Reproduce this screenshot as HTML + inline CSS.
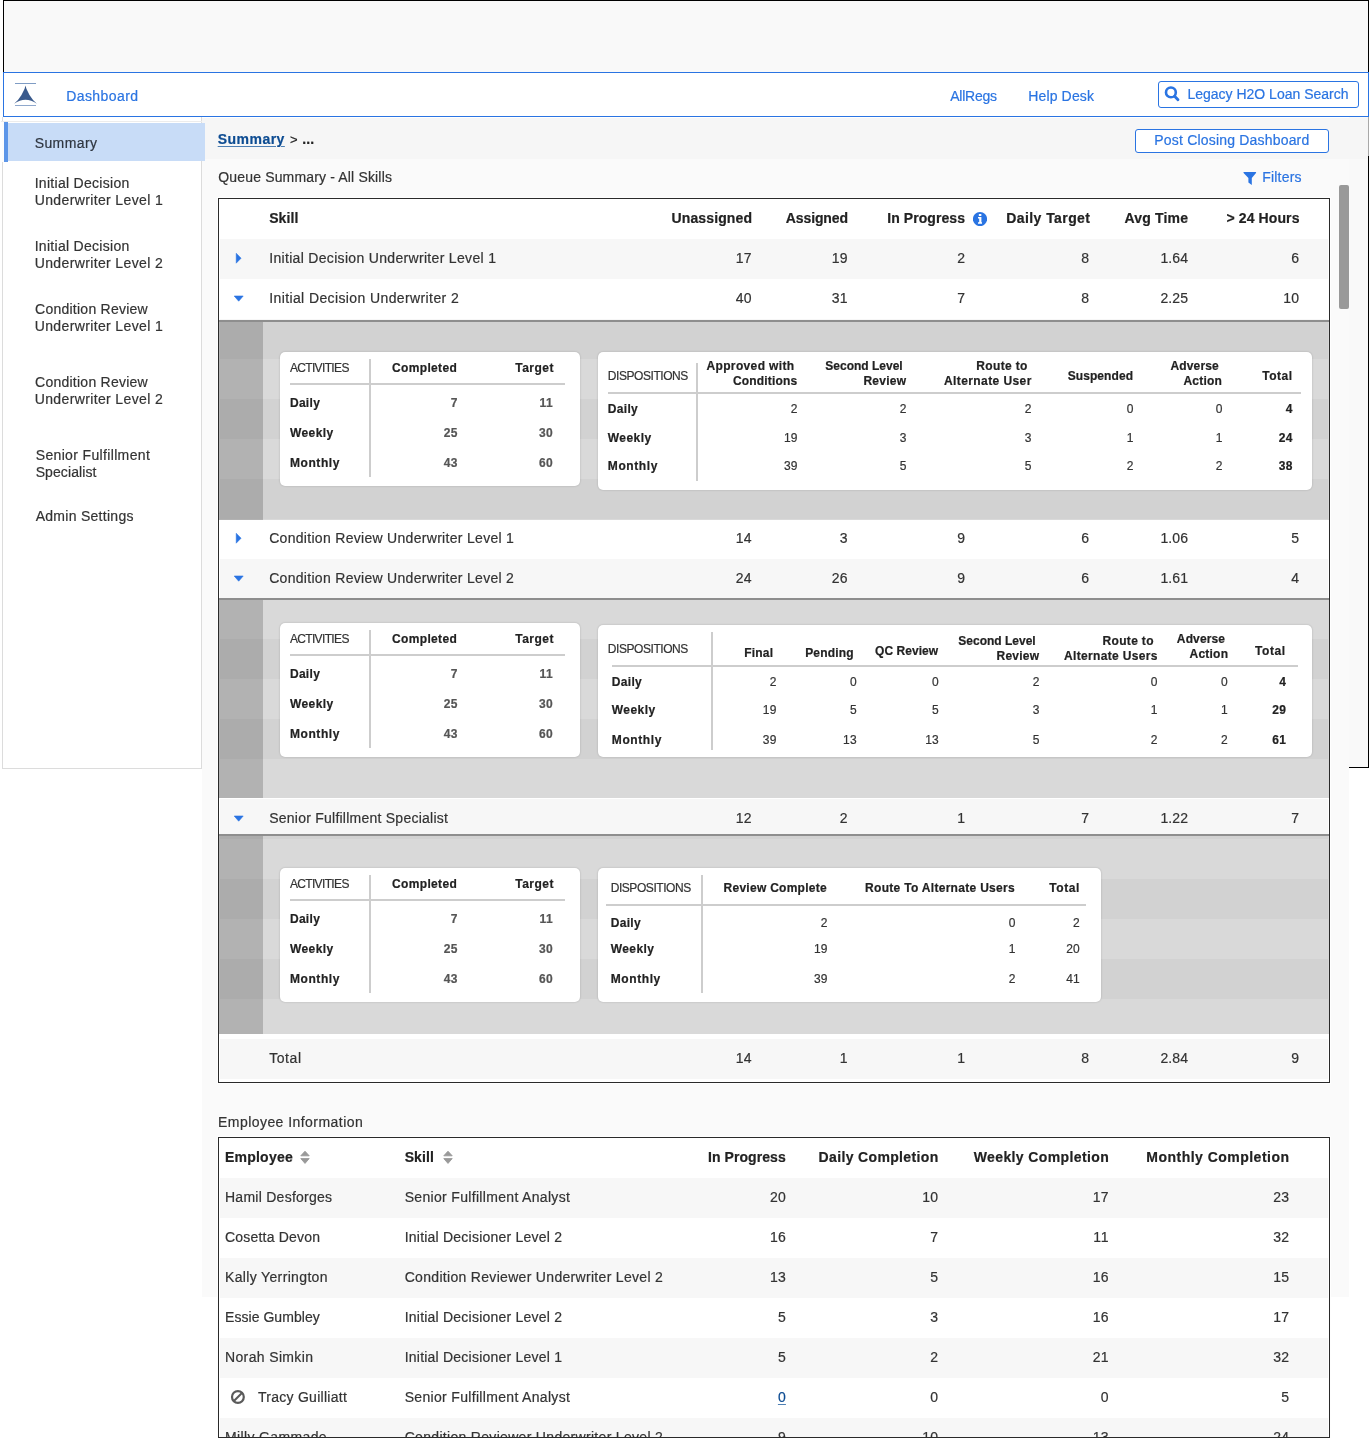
<!DOCTYPE html>
<html lang="en">
<head>
<meta charset="utf-8">
<title>Dashboard - Summary</title>
<style>
html,body{margin:0;padding:0;}
body{position:relative;will-change:transform;width:1369px;height:1438px;overflow:hidden;background:#fff;
  font-family:"Liberation Sans",Arial,Helvetica,sans-serif;font-size:14px;line-height:20px;color:#333;}
body div,body a,body svg{position:absolute;box-sizing:border-box;}
section,nav,header,main{display:block;}
.x{white-space:nowrap;-webkit-text-stroke:.2px;}
a{text-decoration:none;color:inherit;}
.s0{background:#f7f7f7;}
.card{background:#fff;border-radius:5px;box-shadow:0 0 2px rgba(0,0,0,.22);}
.ln{background:#cdcdcd;}

</style>
</head>
<body>
<div style="left:3px;top:0;width:1366px;height:72px;border:1px solid #000;border-bottom:0;background:#f9f9f9"></div>
<div style="left:1349px;top:117px;width:20px;height:651px;border-right:1px solid #000;border-bottom:1px solid #000;background:#f9f9f9"></div>
<header>
<div style="left:3px;top:72px;width:1366px;height:45px;border:1px solid #2a74e2;background:#fff"></div>
<svg style="left:12px;top:80px" width="28" height="28" viewBox="0 0 28 28"><rect x="3" y="3" width="21" height="1" fill="#7f9cc4"/><rect x="3" y="25" width="21" height="1" fill="#8fa8cc"/><path d="M13.5 5.6 L14.4 8.8 L17.5 15 Q20.4 20 24.9 23.7 Q13.5 15.8 2.1 23.7 Q6.6 20 9.5 15 L12.6 8.8Z" fill="#3a5a8c"/></svg>
<a class="x" style="top:86.15px;left:66.2px;color:#2a74e2;"><span style="letter-spacing:0.42px;margin-right:-0.42px">Dashboard</span></a>
<a class="x" style="top:86.15px;left:950.2px;color:#2a74e2;"><span style="letter-spacing:-0.22px;margin-right:0.22px">AllRegs</span></a>
<a class="x" style="top:86.15px;left:1028.2px;color:#2a74e2;"><span style="letter-spacing:0.15px;margin-right:-0.15px">Help Desk</span></a>
<div style="left:1158px;top:81px;width:201px;height:27px;border:1px solid #2a74e2;border-radius:3px;background:#fff"></div>
<svg style="left:1163px;top:84px" width="18" height="19" viewBox="0 0 18 19"><circle cx="7.9" cy="8.4" r="4.9" fill="none" stroke="#2a74e2" stroke-width="2.6"/><path d="M11.6 12.2 L15 15.8" stroke="#2a74e2" stroke-width="2.8" stroke-linecap="round"/></svg>
<div class="x" style="top:84.15px;left:1187.4px;color:#2a74e2;"><span>Legacy H2O Loan Search</span></div>
</header>
<div style="left:202px;top:118px;width:1147px;height:1179px;background:#fafafa"></div>
<div style="left:202px;top:118px;width:1166px;height:41px;background:#f6f6f6"></div>
<nav>
<div style="left:2px;top:117px;width:200px;height:652px;border:1px solid #dcdcdc;border-top:0;background:#fff"></div>
<div style="left:1px;top:121px;width:201px;height:1px;background:#ececec"></div>
<div style="left:2px;top:122px;width:2px;height:40px;background:#fdfdfd"></div>
<div style="left:8px;top:123px;width:197px;height:38px;background:#c8dcf7"></div>
<div style="left:4px;top:122px;width:4px;height:40px;background:#5d96e8"></div>
<a class="x" style="top:133.15px;left:34.7px;color:#2f3640;"><span style="letter-spacing:0.4px;margin-right:-0.4px">Summary</span></a>
<a class="x" style="top:173.15px;left:34.7px;"><span style="letter-spacing:0.29px;margin-right:-0.29px">Initial Decision</span></a>
<a class="x" style="top:190.15px;left:34.7px;"><span style="letter-spacing:0.37px;margin-right:-0.37px">Underwriter Level 1</span></a>
<a class="x" style="top:236.15px;left:34.7px;"><span style="letter-spacing:0.29px;margin-right:-0.29px">Initial Decision</span></a>
<a class="x" style="top:253.15px;left:34.7px;"><span style="letter-spacing:0.37px;margin-right:-0.37px">Underwriter Level 2</span></a>
<a class="x" style="top:299.15px;left:35.1px;"><span style="letter-spacing:0.24px;margin-right:-0.24px">Condition Review</span></a>
<a class="x" style="top:316.15px;left:34.7px;"><span style="letter-spacing:0.37px;margin-right:-0.37px">Underwriter Level 1</span></a>
<a class="x" style="top:372.15px;left:35.1px;"><span style="letter-spacing:0.24px;margin-right:-0.24px">Condition Review</span></a>
<a class="x" style="top:389.15px;left:34.7px;"><span style="letter-spacing:0.37px;margin-right:-0.37px">Underwriter Level 2</span></a>
<a class="x" style="top:445.15px;left:35.7px;"><span style="letter-spacing:0.35px;margin-right:-0.35px">Senior Fulfillment</span></a>
<a class="x" style="top:462.15px;left:35.7px;"><span style="letter-spacing:0.09px;margin-right:-0.09px">Specialist</span></a>
<a class="x" style="top:506.15px;left:35.7px;"><span style="letter-spacing:0.28px;margin-right:-0.28px">Admin Settings</span></a>
</nav>
<main>
<div style="left:1368px;top:117px;width:1px;height:39px;background:#a8a8a8"></div>
<a class="x" style="top:129.15px;left:217.7px;font-weight:700;color:#0d4c92;text-decoration:underline;text-decoration-thickness:1.4px;text-decoration-color:#4f80b4;text-underline-offset:2.4px;"><span style="letter-spacing:0.48px;margin-right:-0.48px">Summary</span></a>
<div class="x" style="top:130.00px;left:289.9px;font-size:13px;line-height:19px;color:#222;"><span style="letter-spacing:-0.16px;margin-right:0.16px">&gt;</span></div>
<div class="x" style="top:129.15px;left:302.3px;font-weight:700;color:#222;"><span style="letter-spacing:0.1px;margin-right:-0.1px">...</span></div>
<div style="left:1135px;top:129px;width:194px;height:24px;border:1px solid #2a74e2;border-radius:3px;background:#fff"></div>
<a class="x" style="top:130.15px;left:1154.3px;color:#2a74e2;"><span style="letter-spacing:0.19px;margin-right:-0.19px">Post Closing Dashboard</span></a>
<div class="x" style="top:167.15px;left:218.3px;"><span style="letter-spacing:0.16px;margin-right:-0.16px">Queue Summary - All Skills</span></div>
<svg style="left:1242px;top:171px" width="16" height="16" viewBox="0 0 16 16"><path d="M2 1.1 H13.6 Q14.6 1.1 14 2 L9.8 7 V14 L6.4 11.4 V7 L1.6 2 Q1 1.1 2 1.1Z" fill="#2a74e2"/></svg>
<a class="x" style="top:166.65px;left:1262.2px;color:#2a74e2;"><span style="letter-spacing:0.2px;margin-right:-0.2px">Filters</span></a>
<div style="left:1339px;top:185px;width:10px;height:124px;background:#999;border-radius:2px"></div>
<section>
<div style="left:218px;top:198px;width:1112px;height:885px;border:1px solid #2a2a2a;background:#fff;box-shadow:0 0 0 1px #fefefe"></div>
<div class="s0" style="left:220px;top:239px;width:1108px;height:40px"></div>
<div class="s0" style="left:220px;top:319px;width:1108px;height:40px"></div>
<div class="s0" style="left:220px;top:399px;width:1108px;height:40px"></div>
<div class="s0" style="left:220px;top:479px;width:1108px;height:40px"></div>
<div class="s0" style="left:220px;top:559px;width:1108px;height:40px"></div>
<div class="s0" style="left:220px;top:639px;width:1108px;height:40px"></div>
<div class="s0" style="left:220px;top:719px;width:1108px;height:40px"></div>
<div class="s0" style="left:220px;top:799px;width:1108px;height:40px"></div>
<div class="s0" style="left:220px;top:879px;width:1108px;height:40px"></div>
<div class="s0" style="left:220px;top:959px;width:1108px;height:40px"></div>
<div class="s0" style="left:220px;top:1039px;width:1108px;height:40px"></div>
<div class="x" style="top:208.15px;left:269.2px;font-weight:700;color:#222;"><span style="letter-spacing:0.08px;margin-right:-0.08px">Skill</span></div>
<div class="x" style="top:208.15px;right:617.0px;text-align:right;font-weight:700;color:#222;"><span style="letter-spacing:0.13px;margin-right:-0.13px">Unassigned</span></div>
<div class="x" style="top:208.15px;right:521.0px;text-align:right;font-weight:700;color:#222;"><span style="letter-spacing:-0.12px;margin-right:0.12px">Assigned</span></div>
<div class="x" style="top:208.15px;right:404.0px;text-align:right;font-weight:700;color:#222;"><span style="letter-spacing:0.07px;margin-right:-0.07px">In Progress</span></div>
<div class="x" style="top:208.15px;right:279.0px;text-align:right;font-weight:700;color:#222;"><span style="letter-spacing:0.42px;margin-right:-0.42px">Daily Target</span></div>
<div class="x" style="top:208.15px;right:181.0px;text-align:right;font-weight:700;color:#222;"><span style="letter-spacing:0.17px;margin-right:-0.17px">Avg Time</span></div>
<div class="x" style="top:208.15px;right:69.5px;text-align:right;font-weight:700;color:#222;"><span style="letter-spacing:0.12px;margin-right:-0.12px">&gt; 24 Hours</span></div>
<svg style="left:973px;top:212px" width="14" height="14" viewBox="0 0 14 14"><circle cx="7" cy="7.1" r="7.1" fill="#2a74e2"/><rect x="5.8" y="1.9" width="2.6" height="2" rx=".4" fill="#fff"/><path d="M5 5.1 H8.4 V10.3 H9 V11.8 H5 V10.3 H6.2 V6.4 H5Z" fill="#fff"/></svg>
<svg style="left:234px;top:251px" width="10" height="14" viewBox="0 0 10 14"><path d="M2.2 2.2 L7.1 7.2 L2.2 12.2Z" fill="#2a74e2" stroke="#2a74e2" stroke-width=".5" stroke-linejoin="round"/></svg>
<div class="x" style="top:248.15px;left:269.2px;"><span style="letter-spacing:0.32px;margin-right:-0.32px">Initial Decision Underwriter Level 1</span></div>
<div class="x" style="top:248.15px;right:617.5px;text-align:right;"><span style="letter-spacing:0.22px;margin-right:-0.22px">17</span></div>
<div class="x" style="top:248.15px;right:521.5px;text-align:right;"><span style="letter-spacing:0.22px;margin-right:-0.22px">19</span></div>
<div class="x" style="top:248.15px;right:404.0px;text-align:right;"><span style="letter-spacing:0.22px;margin-right:-0.22px">2</span></div>
<div class="x" style="top:248.15px;right:280.0px;text-align:right;"><span style="letter-spacing:0.22px;margin-right:-0.22px">8</span></div>
<div class="x" style="top:248.15px;right:181.0px;text-align:right;"><span style="letter-spacing:0.11px;margin-right:-0.11px">1.64</span></div>
<div class="x" style="top:248.15px;right:70.0px;text-align:right;"><span style="letter-spacing:0.22px;margin-right:-0.22px">6</span></div>
<svg style="left:233px;top:293px" width="12" height="10" viewBox="0 0 12 10"><path d="M1.2 3 L10.2 3 L5.7 8.2Z" fill="#2a74e2" stroke="#2a74e2" stroke-width=".6" stroke-linejoin="round"/></svg>
<div class="x" style="top:288.15px;left:269.2px;"><span style="letter-spacing:0.39px;margin-right:-0.39px">Initial Decision Underwriter 2</span></div>
<div class="x" style="top:288.15px;right:617.5px;text-align:right;"><span style="letter-spacing:0.22px;margin-right:-0.22px">40</span></div>
<div class="x" style="top:288.15px;right:521.5px;text-align:right;"><span style="letter-spacing:0.22px;margin-right:-0.22px">31</span></div>
<div class="x" style="top:288.15px;right:404.0px;text-align:right;"><span style="letter-spacing:0.22px;margin-right:-0.22px">7</span></div>
<div class="x" style="top:288.15px;right:280.0px;text-align:right;"><span style="letter-spacing:0.22px;margin-right:-0.22px">8</span></div>
<div class="x" style="top:288.15px;right:181.0px;text-align:right;"><span style="letter-spacing:0.11px;margin-right:-0.11px">2.25</span></div>
<div class="x" style="top:288.15px;right:70.0px;text-align:right;"><span style="letter-spacing:0.22px;margin-right:-0.22px">10</span></div>
<svg style="left:234px;top:531px" width="10" height="14" viewBox="0 0 10 14"><path d="M2.2 2.2 L7.1 7.2 L2.2 12.2Z" fill="#2a74e2" stroke="#2a74e2" stroke-width=".5" stroke-linejoin="round"/></svg>
<div class="x" style="top:528.15px;left:269.2px;"><span style="letter-spacing:0.3px;margin-right:-0.3px">Condition Review Underwriter Level 1</span></div>
<div class="x" style="top:528.15px;right:617.5px;text-align:right;"><span style="letter-spacing:0.22px;margin-right:-0.22px">14</span></div>
<div class="x" style="top:528.15px;right:521.5px;text-align:right;"><span style="letter-spacing:0.22px;margin-right:-0.22px">3</span></div>
<div class="x" style="top:528.15px;right:404.0px;text-align:right;"><span style="letter-spacing:0.22px;margin-right:-0.22px">9</span></div>
<div class="x" style="top:528.15px;right:280.0px;text-align:right;"><span style="letter-spacing:0.22px;margin-right:-0.22px">6</span></div>
<div class="x" style="top:528.15px;right:181.0px;text-align:right;"><span style="letter-spacing:0.11px;margin-right:-0.11px">1.06</span></div>
<div class="x" style="top:528.15px;right:70.0px;text-align:right;"><span style="letter-spacing:0.22px;margin-right:-0.22px">5</span></div>
<svg style="left:233px;top:573px" width="12" height="10" viewBox="0 0 12 10"><path d="M1.2 3 L10.2 3 L5.7 8.2Z" fill="#2a74e2" stroke="#2a74e2" stroke-width=".6" stroke-linejoin="round"/></svg>
<div class="x" style="top:568.15px;left:269.2px;"><span style="letter-spacing:0.3px;margin-right:-0.3px">Condition Review Underwriter Level 2</span></div>
<div class="x" style="top:568.15px;right:617.5px;text-align:right;"><span style="letter-spacing:0.22px;margin-right:-0.22px">24</span></div>
<div class="x" style="top:568.15px;right:521.5px;text-align:right;"><span style="letter-spacing:0.22px;margin-right:-0.22px">26</span></div>
<div class="x" style="top:568.15px;right:404.0px;text-align:right;"><span style="letter-spacing:0.22px;margin-right:-0.22px">9</span></div>
<div class="x" style="top:568.15px;right:280.0px;text-align:right;"><span style="letter-spacing:0.22px;margin-right:-0.22px">6</span></div>
<div class="x" style="top:568.15px;right:181.0px;text-align:right;"><span style="letter-spacing:0.11px;margin-right:-0.11px">1.61</span></div>
<div class="x" style="top:568.15px;right:70.0px;text-align:right;"><span style="letter-spacing:0.22px;margin-right:-0.22px">4</span></div>
<svg style="left:233px;top:813px" width="12" height="10" viewBox="0 0 12 10"><path d="M1.2 3 L10.2 3 L5.7 8.2Z" fill="#2a74e2" stroke="#2a74e2" stroke-width=".6" stroke-linejoin="round"/></svg>
<div class="x" style="top:808.15px;left:269.2px;"><span style="letter-spacing:0.24px;margin-right:-0.24px">Senior Fulfillment Specialist</span></div>
<div class="x" style="top:808.15px;right:617.5px;text-align:right;"><span style="letter-spacing:0.22px;margin-right:-0.22px">12</span></div>
<div class="x" style="top:808.15px;right:521.5px;text-align:right;"><span style="letter-spacing:0.22px;margin-right:-0.22px">2</span></div>
<div class="x" style="top:808.15px;right:404.0px;text-align:right;"><span style="letter-spacing:0.22px;margin-right:-0.22px">1</span></div>
<div class="x" style="top:808.15px;right:280.0px;text-align:right;"><span style="letter-spacing:0.22px;margin-right:-0.22px">7</span></div>
<div class="x" style="top:808.15px;right:181.0px;text-align:right;"><span style="letter-spacing:0.11px;margin-right:-0.11px">1.22</span></div>
<div class="x" style="top:808.15px;right:70.0px;text-align:right;"><span style="letter-spacing:0.22px;margin-right:-0.22px">7</span></div>
<div class="x" style="top:1048.15px;left:269.2px;"><span style="letter-spacing:0.57px;margin-right:-0.57px">Total</span></div>
<div class="x" style="top:1048.15px;right:617.5px;text-align:right;"><span style="letter-spacing:0.22px;margin-right:-0.22px">14</span></div>
<div class="x" style="top:1048.15px;right:521.5px;text-align:right;"><span style="letter-spacing:0.22px;margin-right:-0.22px">1</span></div>
<div class="x" style="top:1048.15px;right:404.0px;text-align:right;"><span style="letter-spacing:0.22px;margin-right:-0.22px">1</span></div>
<div class="x" style="top:1048.15px;right:280.0px;text-align:right;"><span style="letter-spacing:0.22px;margin-right:-0.22px">8</span></div>
<div class="x" style="top:1048.15px;right:181.0px;text-align:right;"><span style="letter-spacing:0.11px;margin-right:-0.11px">2.84</span></div>
<div class="x" style="top:1048.15px;right:70.0px;text-align:right;"><span style="letter-spacing:0.22px;margin-right:-0.22px">9</span></div>
<div style="left:219px;top:320px;width:1110px;height:200px;background:rgba(0,0,0,.148);border-top:2px solid #8e8e8e"></div>
<div style="left:219px;top:322px;width:44px;height:198px;background:rgba(0,0,0,.181)"></div>
<div style="left:219px;top:598px;width:1110px;height:200px;background:rgba(0,0,0,.148);border-top:2px solid #8e8e8e"></div>
<div style="left:219px;top:600px;width:44px;height:198px;background:rgba(0,0,0,.181)"></div>
<div style="left:219px;top:834px;width:1110px;height:200px;background:rgba(0,0,0,.148);border-top:2px solid #8e8e8e"></div>
<div style="left:219px;top:836px;width:44px;height:198px;background:rgba(0,0,0,.181)"></div>
<div class="card" style="left:280px;top:352px;width:300px;height:134px"></div>
<div class="ln" style="left:290px;top:383px;width:275px;height:2px"></div>
<div class="ln" style="left:369px;top:359px;width:2px;height:118px"></div>
<div class="x" style="top:359.24px;left:289.9px;font-size:12px;line-height:18px;"><span style="letter-spacing:-0.65px;margin-right:0.65px">ACTIVITIES</span></div>
<div class="x" style="top:359.24px;right:912.2px;text-align:right;font-size:12px;line-height:18px;font-weight:700;color:#222;"><span style="letter-spacing:0.34px;margin-right:-0.34px">Completed</span></div>
<div class="x" style="top:359.24px;right:815.5px;text-align:right;font-size:12px;line-height:18px;font-weight:700;color:#222;"><span style="letter-spacing:0.49px;margin-right:-0.49px">Target</span></div>
<div class="x" style="top:393.84px;left:289.9px;font-size:12px;line-height:18px;font-weight:700;color:#222;"><span style="letter-spacing:0.32px;margin-right:-0.32px">Daily</span></div>
<div class="x" style="top:393.84px;right:911.7px;text-align:right;font-size:12px;line-height:18px;font-weight:700;color:#555;"><span style="letter-spacing:0.19px;margin-right:-0.19px">7</span></div>
<div class="x" style="top:393.84px;right:816.4px;text-align:right;font-size:12px;line-height:18px;font-weight:700;color:#555;"><span style="letter-spacing:0.52px;margin-right:-0.52px">11</span></div>
<div class="x" style="top:423.84px;left:289.9px;font-size:12px;line-height:18px;font-weight:700;color:#222;"><span style="letter-spacing:0.43px;margin-right:-0.43px">Weekly</span></div>
<div class="x" style="top:423.84px;right:911.7px;text-align:right;font-size:12px;line-height:18px;font-weight:700;color:#555;"><span style="letter-spacing:0.19px;margin-right:-0.19px">25</span></div>
<div class="x" style="top:423.84px;right:816.4px;text-align:right;font-size:12px;line-height:18px;font-weight:700;color:#555;"><span style="letter-spacing:0.19px;margin-right:-0.19px">30</span></div>
<div class="x" style="top:453.84px;left:289.9px;font-size:12px;line-height:18px;font-weight:700;color:#222;"><span style="letter-spacing:0.6px;margin-right:-0.6px">Monthly</span></div>
<div class="x" style="top:453.84px;right:911.7px;text-align:right;font-size:12px;line-height:18px;font-weight:700;color:#555;"><span style="letter-spacing:0.19px;margin-right:-0.19px">43</span></div>
<div class="x" style="top:453.84px;right:816.4px;text-align:right;font-size:12px;line-height:18px;font-weight:700;color:#555;"><span style="letter-spacing:0.19px;margin-right:-0.19px">60</span></div>
<div class="card" style="left:280px;top:623px;width:300px;height:134px"></div>
<div class="ln" style="left:290px;top:654px;width:275px;height:2px"></div>
<div class="ln" style="left:369px;top:630px;width:2px;height:118px"></div>
<div class="x" style="top:630.24px;left:289.9px;font-size:12px;line-height:18px;"><span style="letter-spacing:-0.65px;margin-right:0.65px">ACTIVITIES</span></div>
<div class="x" style="top:630.24px;right:912.2px;text-align:right;font-size:12px;line-height:18px;font-weight:700;color:#222;"><span style="letter-spacing:0.34px;margin-right:-0.34px">Completed</span></div>
<div class="x" style="top:630.24px;right:815.5px;text-align:right;font-size:12px;line-height:18px;font-weight:700;color:#222;"><span style="letter-spacing:0.49px;margin-right:-0.49px">Target</span></div>
<div class="x" style="top:664.84px;left:289.9px;font-size:12px;line-height:18px;font-weight:700;color:#222;"><span style="letter-spacing:0.32px;margin-right:-0.32px">Daily</span></div>
<div class="x" style="top:664.84px;right:911.7px;text-align:right;font-size:12px;line-height:18px;font-weight:700;color:#555;"><span style="letter-spacing:0.19px;margin-right:-0.19px">7</span></div>
<div class="x" style="top:664.84px;right:816.4px;text-align:right;font-size:12px;line-height:18px;font-weight:700;color:#555;"><span style="letter-spacing:0.52px;margin-right:-0.52px">11</span></div>
<div class="x" style="top:694.84px;left:289.9px;font-size:12px;line-height:18px;font-weight:700;color:#222;"><span style="letter-spacing:0.43px;margin-right:-0.43px">Weekly</span></div>
<div class="x" style="top:694.84px;right:911.7px;text-align:right;font-size:12px;line-height:18px;font-weight:700;color:#555;"><span style="letter-spacing:0.19px;margin-right:-0.19px">25</span></div>
<div class="x" style="top:694.84px;right:816.4px;text-align:right;font-size:12px;line-height:18px;font-weight:700;color:#555;"><span style="letter-spacing:0.19px;margin-right:-0.19px">30</span></div>
<div class="x" style="top:724.84px;left:289.9px;font-size:12px;line-height:18px;font-weight:700;color:#222;"><span style="letter-spacing:0.6px;margin-right:-0.6px">Monthly</span></div>
<div class="x" style="top:724.84px;right:911.7px;text-align:right;font-size:12px;line-height:18px;font-weight:700;color:#555;"><span style="letter-spacing:0.19px;margin-right:-0.19px">43</span></div>
<div class="x" style="top:724.84px;right:816.4px;text-align:right;font-size:12px;line-height:18px;font-weight:700;color:#555;"><span style="letter-spacing:0.19px;margin-right:-0.19px">60</span></div>
<div class="card" style="left:280px;top:868px;width:300px;height:134px"></div>
<div class="ln" style="left:290px;top:899px;width:275px;height:2px"></div>
<div class="ln" style="left:369px;top:875px;width:2px;height:118px"></div>
<div class="x" style="top:875.24px;left:289.9px;font-size:12px;line-height:18px;"><span style="letter-spacing:-0.65px;margin-right:0.65px">ACTIVITIES</span></div>
<div class="x" style="top:875.24px;right:912.2px;text-align:right;font-size:12px;line-height:18px;font-weight:700;color:#222;"><span style="letter-spacing:0.34px;margin-right:-0.34px">Completed</span></div>
<div class="x" style="top:875.24px;right:815.5px;text-align:right;font-size:12px;line-height:18px;font-weight:700;color:#222;"><span style="letter-spacing:0.49px;margin-right:-0.49px">Target</span></div>
<div class="x" style="top:909.84px;left:289.9px;font-size:12px;line-height:18px;font-weight:700;color:#222;"><span style="letter-spacing:0.32px;margin-right:-0.32px">Daily</span></div>
<div class="x" style="top:909.84px;right:911.7px;text-align:right;font-size:12px;line-height:18px;font-weight:700;color:#555;"><span style="letter-spacing:0.19px;margin-right:-0.19px">7</span></div>
<div class="x" style="top:909.84px;right:816.4px;text-align:right;font-size:12px;line-height:18px;font-weight:700;color:#555;"><span style="letter-spacing:0.52px;margin-right:-0.52px">11</span></div>
<div class="x" style="top:939.84px;left:289.9px;font-size:12px;line-height:18px;font-weight:700;color:#222;"><span style="letter-spacing:0.43px;margin-right:-0.43px">Weekly</span></div>
<div class="x" style="top:939.84px;right:911.7px;text-align:right;font-size:12px;line-height:18px;font-weight:700;color:#555;"><span style="letter-spacing:0.19px;margin-right:-0.19px">25</span></div>
<div class="x" style="top:939.84px;right:816.4px;text-align:right;font-size:12px;line-height:18px;font-weight:700;color:#555;"><span style="letter-spacing:0.19px;margin-right:-0.19px">30</span></div>
<div class="x" style="top:969.84px;left:289.9px;font-size:12px;line-height:18px;font-weight:700;color:#222;"><span style="letter-spacing:0.6px;margin-right:-0.6px">Monthly</span></div>
<div class="x" style="top:969.84px;right:911.7px;text-align:right;font-size:12px;line-height:18px;font-weight:700;color:#555;"><span style="letter-spacing:0.19px;margin-right:-0.19px">43</span></div>
<div class="x" style="top:969.84px;right:816.4px;text-align:right;font-size:12px;line-height:18px;font-weight:700;color:#555;"><span style="letter-spacing:0.19px;margin-right:-0.19px">60</span></div>
<div class="card" style="left:597.5px;top:352px;width:714px;height:138px"></div>
<div class="ln" style="left:608px;top:392px;width:693px;height:2px"></div>
<div class="ln" style="left:696px;top:363px;width:2px;height:118px"></div>
<div class="x" style="top:366.84px;left:607.8px;font-size:12px;line-height:18px;"><span style="letter-spacing:-0.44px;margin-right:0.44px">DISPOSITIONS</span></div>
<div class="x" style="top:357.34px;right:574.9px;text-align:right;font-size:12px;line-height:18px;font-weight:700;color:#222;"><span style="letter-spacing:0.36px;margin-right:-0.36px">Approved with</span></div>
<div class="x" style="top:372.34px;right:571.8px;text-align:right;font-size:12px;line-height:18px;font-weight:700;color:#222;"><span style="letter-spacing:0.17px;margin-right:-0.17px">Conditions</span></div>
<div class="x" style="top:357.34px;right:466.3px;text-align:right;font-size:12px;line-height:18px;font-weight:700;color:#222;"><span>Second Level</span></div>
<div class="x" style="top:372.34px;right:463.0px;text-align:right;font-size:12px;line-height:18px;font-weight:700;color:#222;"><span style="letter-spacing:0.25px;margin-right:-0.25px">Review</span></div>
<div class="x" style="top:357.04px;right:341.7px;text-align:right;font-size:12px;line-height:18px;font-weight:700;color:#222;"><span style="letter-spacing:0.33px;margin-right:-0.33px">Route to</span></div>
<div class="x" style="top:372.04px;right:337.7px;text-align:right;font-size:12px;line-height:18px;font-weight:700;color:#222;"><span style="letter-spacing:0.41px;margin-right:-0.41px">Alternate User</span></div>
<div class="x" style="top:366.54px;right:236.0px;text-align:right;font-size:12px;line-height:18px;font-weight:700;color:#222;"><span style="letter-spacing:0.07px;margin-right:-0.07px">Suspended</span></div>
<div class="x" style="top:357.04px;right:150.3px;text-align:right;font-size:12px;line-height:18px;font-weight:700;color:#222;"><span style="letter-spacing:0.13px;margin-right:-0.13px">Adverse</span></div>
<div class="x" style="top:372.04px;right:147.1px;text-align:right;font-size:12px;line-height:18px;font-weight:700;color:#222;"><span style="letter-spacing:0.22px;margin-right:-0.22px">Action</span></div>
<div class="x" style="top:366.54px;right:76.9px;text-align:right;font-size:12px;line-height:18px;font-weight:700;color:#222;"><span style="letter-spacing:0.54px;margin-right:-0.54px">Total</span></div>
<div class="x" style="top:399.64px;left:607.8px;font-size:12px;line-height:18px;font-weight:700;color:#222;"><span style="letter-spacing:0.32px;margin-right:-0.32px">Daily</span></div>
<div class="x" style="top:399.64px;right:571.5px;text-align:right;font-size:12px;line-height:18px;"><span style="letter-spacing:0.19px;margin-right:-0.19px">2</span></div>
<div class="x" style="top:399.64px;right:462.5px;text-align:right;font-size:12px;line-height:18px;"><span style="letter-spacing:0.19px;margin-right:-0.19px">2</span></div>
<div class="x" style="top:399.64px;right:337.5px;text-align:right;font-size:12px;line-height:18px;"><span style="letter-spacing:0.19px;margin-right:-0.19px">2</span></div>
<div class="x" style="top:399.64px;right:235.5px;text-align:right;font-size:12px;line-height:18px;"><span style="letter-spacing:0.19px;margin-right:-0.19px">0</span></div>
<div class="x" style="top:399.64px;right:146.6px;text-align:right;font-size:12px;line-height:18px;"><span style="letter-spacing:0.19px;margin-right:-0.19px">0</span></div>
<div class="x" style="top:399.64px;right:76.6px;text-align:right;font-size:12px;line-height:18px;font-weight:700;color:#222;"><span style="letter-spacing:0.19px;margin-right:-0.19px">4</span></div>
<div class="x" style="top:428.64px;left:607.8px;font-size:12px;line-height:18px;font-weight:700;color:#222;"><span style="letter-spacing:0.43px;margin-right:-0.43px">Weekly</span></div>
<div class="x" style="top:428.64px;right:571.5px;text-align:right;font-size:12px;line-height:18px;"><span style="letter-spacing:0.19px;margin-right:-0.19px">19</span></div>
<div class="x" style="top:428.64px;right:462.5px;text-align:right;font-size:12px;line-height:18px;"><span style="letter-spacing:0.19px;margin-right:-0.19px">3</span></div>
<div class="x" style="top:428.64px;right:337.5px;text-align:right;font-size:12px;line-height:18px;"><span style="letter-spacing:0.19px;margin-right:-0.19px">3</span></div>
<div class="x" style="top:428.64px;right:235.5px;text-align:right;font-size:12px;line-height:18px;"><span style="letter-spacing:0.19px;margin-right:-0.19px">1</span></div>
<div class="x" style="top:428.64px;right:146.6px;text-align:right;font-size:12px;line-height:18px;"><span style="letter-spacing:0.19px;margin-right:-0.19px">1</span></div>
<div class="x" style="top:428.64px;right:76.6px;text-align:right;font-size:12px;line-height:18px;font-weight:700;color:#222;"><span style="letter-spacing:0.19px;margin-right:-0.19px">24</span></div>
<div class="x" style="top:457.24px;left:607.8px;font-size:12px;line-height:18px;font-weight:700;color:#222;"><span style="letter-spacing:0.6px;margin-right:-0.6px">Monthly</span></div>
<div class="x" style="top:457.24px;right:571.5px;text-align:right;font-size:12px;line-height:18px;"><span style="letter-spacing:0.19px;margin-right:-0.19px">39</span></div>
<div class="x" style="top:457.24px;right:462.5px;text-align:right;font-size:12px;line-height:18px;"><span style="letter-spacing:0.19px;margin-right:-0.19px">5</span></div>
<div class="x" style="top:457.24px;right:337.5px;text-align:right;font-size:12px;line-height:18px;"><span style="letter-spacing:0.19px;margin-right:-0.19px">5</span></div>
<div class="x" style="top:457.24px;right:235.5px;text-align:right;font-size:12px;line-height:18px;"><span style="letter-spacing:0.19px;margin-right:-0.19px">2</span></div>
<div class="x" style="top:457.24px;right:146.6px;text-align:right;font-size:12px;line-height:18px;"><span style="letter-spacing:0.19px;margin-right:-0.19px">2</span></div>
<div class="x" style="top:457.24px;right:76.6px;text-align:right;font-size:12px;line-height:18px;font-weight:700;color:#222;"><span style="letter-spacing:0.19px;margin-right:-0.19px">38</span></div>
<div class="card" style="left:598px;top:625px;width:713.5px;height:132px"></div>
<div class="ln" style="left:612px;top:664.5px;width:685.6px;height:2px"></div>
<div class="ln" style="left:711px;top:632px;width:2px;height:118px"></div>
<div class="x" style="top:639.94px;left:607.8px;font-size:12px;line-height:18px;"><span style="letter-spacing:-0.44px;margin-right:0.44px">DISPOSITIONS</span></div>
<div class="x" style="top:643.84px;right:596.0px;text-align:right;font-size:12px;line-height:18px;font-weight:700;color:#222;"><span style="letter-spacing:0.21px;margin-right:-0.21px">Final</span></div>
<div class="x" style="top:643.84px;right:515.5px;text-align:right;font-size:12px;line-height:18px;font-weight:700;color:#222;"><span style="letter-spacing:0.16px;margin-right:-0.16px">Pending</span></div>
<div class="x" style="top:642.04px;right:430.9px;text-align:right;font-size:12px;line-height:18px;font-weight:700;color:#222;"><span style="letter-spacing:0.05px;margin-right:-0.05px">QC Review</span></div>
<div class="x" style="top:632.04px;right:333.3px;text-align:right;font-size:12px;line-height:18px;font-weight:700;color:#222;"><span>Second Level</span></div>
<div class="x" style="top:646.54px;right:329.9px;text-align:right;font-size:12px;line-height:18px;font-weight:700;color:#222;"><span style="letter-spacing:0.25px;margin-right:-0.25px">Review</span></div>
<div class="x" style="top:632.04px;right:215.5px;text-align:right;font-size:12px;line-height:18px;font-weight:700;color:#222;"><span style="letter-spacing:0.33px;margin-right:-0.33px">Route to</span></div>
<div class="x" style="top:646.54px;right:211.5px;text-align:right;font-size:12px;line-height:18px;font-weight:700;color:#222;"><span style="letter-spacing:0.34px;margin-right:-0.34px">Alternate Users</span></div>
<div class="x" style="top:629.94px;right:144.0px;text-align:right;font-size:12px;line-height:18px;font-weight:700;color:#222;"><span style="letter-spacing:0.13px;margin-right:-0.13px">Adverse</span></div>
<div class="x" style="top:644.74px;right:141.0px;text-align:right;font-size:12px;line-height:18px;font-weight:700;color:#222;"><span style="letter-spacing:0.22px;margin-right:-0.22px">Action</span></div>
<div class="x" style="top:641.84px;right:84.0px;text-align:right;font-size:12px;line-height:18px;font-weight:700;color:#222;"><span style="letter-spacing:0.54px;margin-right:-0.54px">Total</span></div>
<div class="x" style="top:672.84px;left:611.8px;font-size:12px;line-height:18px;font-weight:700;color:#222;"><span style="letter-spacing:0.32px;margin-right:-0.32px">Daily</span></div>
<div class="x" style="top:672.84px;right:592.6px;text-align:right;font-size:12px;line-height:18px;"><span style="letter-spacing:0.19px;margin-right:-0.19px">2</span></div>
<div class="x" style="top:672.84px;right:512.4px;text-align:right;font-size:12px;line-height:18px;"><span style="letter-spacing:0.19px;margin-right:-0.19px">0</span></div>
<div class="x" style="top:672.84px;right:430.3px;text-align:right;font-size:12px;line-height:18px;"><span style="letter-spacing:0.19px;margin-right:-0.19px">0</span></div>
<div class="x" style="top:672.84px;right:329.6px;text-align:right;font-size:12px;line-height:18px;"><span style="letter-spacing:0.19px;margin-right:-0.19px">2</span></div>
<div class="x" style="top:672.84px;right:211.5px;text-align:right;font-size:12px;line-height:18px;"><span style="letter-spacing:0.19px;margin-right:-0.19px">0</span></div>
<div class="x" style="top:672.84px;right:141.3px;text-align:right;font-size:12px;line-height:18px;"><span style="letter-spacing:0.19px;margin-right:-0.19px">0</span></div>
<div class="x" style="top:672.84px;right:83.2px;text-align:right;font-size:12px;line-height:18px;font-weight:700;color:#222;"><span style="letter-spacing:0.19px;margin-right:-0.19px">4</span></div>
<div class="x" style="top:700.84px;left:611.8px;font-size:12px;line-height:18px;font-weight:700;color:#222;"><span style="letter-spacing:0.43px;margin-right:-0.43px">Weekly</span></div>
<div class="x" style="top:700.84px;right:592.6px;text-align:right;font-size:12px;line-height:18px;"><span style="letter-spacing:0.19px;margin-right:-0.19px">19</span></div>
<div class="x" style="top:700.84px;right:512.4px;text-align:right;font-size:12px;line-height:18px;"><span style="letter-spacing:0.19px;margin-right:-0.19px">5</span></div>
<div class="x" style="top:700.84px;right:430.3px;text-align:right;font-size:12px;line-height:18px;"><span style="letter-spacing:0.19px;margin-right:-0.19px">5</span></div>
<div class="x" style="top:700.84px;right:329.6px;text-align:right;font-size:12px;line-height:18px;"><span style="letter-spacing:0.19px;margin-right:-0.19px">3</span></div>
<div class="x" style="top:700.84px;right:211.5px;text-align:right;font-size:12px;line-height:18px;"><span style="letter-spacing:0.19px;margin-right:-0.19px">1</span></div>
<div class="x" style="top:700.84px;right:141.3px;text-align:right;font-size:12px;line-height:18px;"><span style="letter-spacing:0.19px;margin-right:-0.19px">1</span></div>
<div class="x" style="top:700.84px;right:83.2px;text-align:right;font-size:12px;line-height:18px;font-weight:700;color:#222;"><span style="letter-spacing:0.19px;margin-right:-0.19px">29</span></div>
<div class="x" style="top:730.64px;left:611.8px;font-size:12px;line-height:18px;font-weight:700;color:#222;"><span style="letter-spacing:0.6px;margin-right:-0.6px">Monthly</span></div>
<div class="x" style="top:730.64px;right:592.6px;text-align:right;font-size:12px;line-height:18px;"><span style="letter-spacing:0.19px;margin-right:-0.19px">39</span></div>
<div class="x" style="top:730.64px;right:512.4px;text-align:right;font-size:12px;line-height:18px;"><span style="letter-spacing:0.19px;margin-right:-0.19px">13</span></div>
<div class="x" style="top:730.64px;right:430.3px;text-align:right;font-size:12px;line-height:18px;"><span style="letter-spacing:0.19px;margin-right:-0.19px">13</span></div>
<div class="x" style="top:730.64px;right:329.6px;text-align:right;font-size:12px;line-height:18px;"><span style="letter-spacing:0.19px;margin-right:-0.19px">5</span></div>
<div class="x" style="top:730.64px;right:211.5px;text-align:right;font-size:12px;line-height:18px;"><span style="letter-spacing:0.19px;margin-right:-0.19px">2</span></div>
<div class="x" style="top:730.64px;right:141.3px;text-align:right;font-size:12px;line-height:18px;"><span style="letter-spacing:0.19px;margin-right:-0.19px">2</span></div>
<div class="x" style="top:730.64px;right:83.2px;text-align:right;font-size:12px;line-height:18px;font-weight:700;color:#222;"><span style="letter-spacing:0.19px;margin-right:-0.19px">61</span></div>
<div class="card" style="left:598px;top:868px;width:503px;height:134px"></div>
<div class="ln" style="left:606.4px;top:904px;width:479.7px;height:2px"></div>
<div class="ln" style="left:701px;top:875px;width:2px;height:118px"></div>
<div class="x" style="top:879.14px;left:610.7px;font-size:12px;line-height:18px;"><span style="letter-spacing:-0.44px;margin-right:0.44px">DISPOSITIONS</span></div>
<div class="x" style="top:879.14px;right:542.3px;text-align:right;font-size:12px;line-height:18px;font-weight:700;color:#222;"><span style="letter-spacing:0.27px;margin-right:-0.27px">Review Complete</span></div>
<div class="x" style="top:879.14px;right:354.3px;text-align:right;font-size:12px;line-height:18px;font-weight:700;color:#222;"><span style="letter-spacing:0.3px;margin-right:-0.3px">Route To Alternate Users</span></div>
<div class="x" style="top:879.14px;right:289.7px;text-align:right;font-size:12px;line-height:18px;font-weight:700;color:#222;"><span style="letter-spacing:0.54px;margin-right:-0.54px">Total</span></div>
<div class="x" style="top:913.84px;left:610.7px;font-size:12px;line-height:18px;font-weight:700;color:#222;"><span style="letter-spacing:0.32px;margin-right:-0.32px">Daily</span></div>
<div class="x" style="top:913.84px;right:541.5px;text-align:right;font-size:12px;line-height:18px;"><span style="letter-spacing:0.19px;margin-right:-0.19px">2</span></div>
<div class="x" style="top:913.84px;right:353.5px;text-align:right;font-size:12px;line-height:18px;"><span style="letter-spacing:0.19px;margin-right:-0.19px">0</span></div>
<div class="x" style="top:913.84px;right:289.3px;text-align:right;font-size:12px;line-height:18px;"><span style="letter-spacing:0.19px;margin-right:-0.19px">2</span></div>
<div class="x" style="top:939.84px;left:610.7px;font-size:12px;line-height:18px;font-weight:700;color:#222;"><span style="letter-spacing:0.43px;margin-right:-0.43px">Weekly</span></div>
<div class="x" style="top:939.84px;right:541.5px;text-align:right;font-size:12px;line-height:18px;"><span style="letter-spacing:0.19px;margin-right:-0.19px">19</span></div>
<div class="x" style="top:939.84px;right:353.5px;text-align:right;font-size:12px;line-height:18px;"><span style="letter-spacing:0.19px;margin-right:-0.19px">1</span></div>
<div class="x" style="top:939.84px;right:289.3px;text-align:right;font-size:12px;line-height:18px;"><span style="letter-spacing:0.19px;margin-right:-0.19px">20</span></div>
<div class="x" style="top:969.54px;left:610.7px;font-size:12px;line-height:18px;font-weight:700;color:#222;"><span style="letter-spacing:0.6px;margin-right:-0.6px">Monthly</span></div>
<div class="x" style="top:969.54px;right:541.5px;text-align:right;font-size:12px;line-height:18px;"><span style="letter-spacing:0.19px;margin-right:-0.19px">39</span></div>
<div class="x" style="top:969.54px;right:353.5px;text-align:right;font-size:12px;line-height:18px;"><span style="letter-spacing:0.19px;margin-right:-0.19px">2</span></div>
<div class="x" style="top:969.54px;right:289.3px;text-align:right;font-size:12px;line-height:18px;"><span style="letter-spacing:0.19px;margin-right:-0.19px">41</span></div>
</section>
<section>
<div class="x" style="top:1111.85px;left:218.0px;"><span style="letter-spacing:0.45px;margin-right:-0.45px">Employee Information</span></div>
<div style="left:218px;top:1137px;width:1112px;height:301px;border:1px solid #2a2a2a;background:#fff;box-shadow:0 0 0 1px #fefefe"></div>
<div class="x" style="top:1147.15px;left:225.0px;font-weight:700;color:#222;"><span style="letter-spacing:0.22px;margin-right:-0.22px">Employee</span></div>
<div class="x" style="top:1147.15px;left:404.7px;font-weight:700;color:#222;"><span style="letter-spacing:0.08px;margin-right:-0.08px">Skill</span></div>
<div class="x" style="top:1147.15px;right:583.3px;text-align:right;font-weight:700;color:#222;"><span style="letter-spacing:0.07px;margin-right:-0.07px">In Progress</span></div>
<div class="x" style="top:1147.15px;right:430.8px;text-align:right;font-weight:700;color:#222;"><span style="letter-spacing:0.35px;margin-right:-0.35px">Daily Completion</span></div>
<div class="x" style="top:1147.15px;right:260.2px;text-align:right;font-weight:700;color:#222;"><span style="letter-spacing:0.39px;margin-right:-0.39px">Weekly Completion</span></div>
<div class="x" style="top:1147.15px;right:80.0px;text-align:right;font-weight:700;color:#222;"><span style="letter-spacing:0.48px;margin-right:-0.48px">Monthly Completion</span></div>
<svg style="left:299.5px;top:1150px" width="10" height="15" viewBox="0 0 10 15"><path d="M.8 5.8 L5 1.2 L9.2 5.8Z M.8 8.6 L5 13.4 L9.2 8.6Z" fill="#999" stroke="#999" stroke-width=".9" stroke-linejoin="round"/></svg>
<svg style="left:443px;top:1150px" width="10" height="15" viewBox="0 0 10 15"><path d="M.8 5.8 L5 1.2 L9.2 5.8Z M.8 8.6 L5 13.4 L9.2 8.6Z" fill="#999" stroke="#999" stroke-width=".9" stroke-linejoin="round"/></svg>
<div class="s0" style="left:220px;top:1178px;width:1108px;height:40px"></div>
<div class="x" style="top:1186.65px;left:225.0px;"><span style="letter-spacing:0.26px;margin-right:-0.26px">Hamil Desforges</span></div>
<div class="x" style="top:1186.65px;left:404.7px;"><span style="letter-spacing:0.32px;margin-right:-0.32px">Senior Fulfillment Analyst</span></div>
<div class="x" style="top:1186.65px;right:583.3px;text-align:right;"><span style="letter-spacing:0.22px;margin-right:-0.22px">20</span></div>
<div class="x" style="top:1186.65px;right:431.0px;text-align:right;"><span style="letter-spacing:0.22px;margin-right:-0.22px">10</span></div>
<div class="x" style="top:1186.65px;right:260.5px;text-align:right;"><span style="letter-spacing:0.22px;margin-right:-0.22px">17</span></div>
<div class="x" style="top:1186.65px;right:80.0px;text-align:right;"><span style="letter-spacing:0.22px;margin-right:-0.22px">23</span></div>
<div class="x" style="top:1226.65px;left:225.0px;"><span style="letter-spacing:0.2px;margin-right:-0.2px">Cosetta Devon</span></div>
<div class="x" style="top:1226.65px;left:404.7px;"><span style="letter-spacing:0.22px;margin-right:-0.22px">Initial Decisioner Level 2</span></div>
<div class="x" style="top:1226.65px;right:583.3px;text-align:right;"><span style="letter-spacing:0.22px;margin-right:-0.22px">16</span></div>
<div class="x" style="top:1226.65px;right:431.0px;text-align:right;"><span style="letter-spacing:0.22px;margin-right:-0.22px">7</span></div>
<div class="x" style="top:1226.65px;right:260.5px;text-align:right;"><span style="letter-spacing:0.73px;margin-right:-0.73px">11</span></div>
<div class="x" style="top:1226.65px;right:80.0px;text-align:right;"><span style="letter-spacing:0.22px;margin-right:-0.22px">32</span></div>
<div class="s0" style="left:220px;top:1258px;width:1108px;height:40px"></div>
<div class="x" style="top:1266.65px;left:225.0px;"><span style="letter-spacing:0.35px;margin-right:-0.35px">Kally Yerrington</span></div>
<div class="x" style="top:1266.65px;left:404.7px;"><span style="letter-spacing:0.31px;margin-right:-0.31px">Condition Reviewer Underwriter Level 2</span></div>
<div class="x" style="top:1266.65px;right:583.3px;text-align:right;"><span style="letter-spacing:0.22px;margin-right:-0.22px">13</span></div>
<div class="x" style="top:1266.65px;right:431.0px;text-align:right;"><span style="letter-spacing:0.22px;margin-right:-0.22px">5</span></div>
<div class="x" style="top:1266.65px;right:260.5px;text-align:right;"><span style="letter-spacing:0.22px;margin-right:-0.22px">16</span></div>
<div class="x" style="top:1266.65px;right:80.0px;text-align:right;"><span style="letter-spacing:0.22px;margin-right:-0.22px">15</span></div>
<div class="x" style="top:1306.65px;left:225.0px;"><span style="letter-spacing:0.05px;margin-right:-0.05px">Essie Gumbley</span></div>
<div class="x" style="top:1306.65px;left:404.7px;"><span style="letter-spacing:0.22px;margin-right:-0.22px">Initial Decisioner Level 2</span></div>
<div class="x" style="top:1306.65px;right:583.3px;text-align:right;"><span style="letter-spacing:0.22px;margin-right:-0.22px">5</span></div>
<div class="x" style="top:1306.65px;right:431.0px;text-align:right;"><span style="letter-spacing:0.22px;margin-right:-0.22px">3</span></div>
<div class="x" style="top:1306.65px;right:260.5px;text-align:right;"><span style="letter-spacing:0.22px;margin-right:-0.22px">16</span></div>
<div class="x" style="top:1306.65px;right:80.0px;text-align:right;"><span style="letter-spacing:0.22px;margin-right:-0.22px">17</span></div>
<div class="s0" style="left:220px;top:1338px;width:1108px;height:40px"></div>
<div class="x" style="top:1346.65px;left:225.0px;"><span style="letter-spacing:0.36px;margin-right:-0.36px">Norah Simkin</span></div>
<div class="x" style="top:1346.65px;left:404.7px;"><span style="letter-spacing:0.22px;margin-right:-0.22px">Initial Decisioner Level 1</span></div>
<div class="x" style="top:1346.65px;right:583.3px;text-align:right;"><span style="letter-spacing:0.22px;margin-right:-0.22px">5</span></div>
<div class="x" style="top:1346.65px;right:431.0px;text-align:right;"><span style="letter-spacing:0.22px;margin-right:-0.22px">2</span></div>
<div class="x" style="top:1346.65px;right:260.5px;text-align:right;"><span style="letter-spacing:0.22px;margin-right:-0.22px">21</span></div>
<div class="x" style="top:1346.65px;right:80.0px;text-align:right;"><span style="letter-spacing:0.22px;margin-right:-0.22px">32</span></div>
<svg style="left:230px;top:1390px" width="15" height="15" viewBox="0 0 15 15"><circle cx="7.9" cy="7" r="5.9" fill="none" stroke="#5a5a5a" stroke-width="2.2"/><path d="M3.9 11 L11.9 3" stroke="#5a5a5a" stroke-width="2.1"/></svg>
<div class="x" style="top:1386.65px;left:257.9px;"><span style="letter-spacing:0.28px;margin-right:-0.28px">Tracy Guilliatt</span></div>
<div class="x" style="top:1386.65px;left:404.7px;"><span style="letter-spacing:0.32px;margin-right:-0.32px">Senior Fulfillment Analyst</span></div>
<a class="x" style="top:1386.65px;right:583.3px;text-align:right;color:#0d4c92;text-decoration:underline;text-decoration-thickness:1.4px;text-decoration-color:#4f80b4;text-underline-offset:2.4px;"><span style="letter-spacing:0.22px;margin-right:-0.22px">0</span></a>
<div class="x" style="top:1386.65px;right:431.0px;text-align:right;"><span style="letter-spacing:0.22px;margin-right:-0.22px">0</span></div>
<div class="x" style="top:1386.65px;right:260.5px;text-align:right;"><span style="letter-spacing:0.22px;margin-right:-0.22px">0</span></div>
<div class="x" style="top:1386.65px;right:80.0px;text-align:right;"><span style="letter-spacing:0.22px;margin-right:-0.22px">5</span></div>
<div class="s0" style="left:220px;top:1418px;width:1108px;height:19px"></div>
<div class="x" style="top:1426.65px;left:225.0px;height:10.3px;overflow:hidden;"><span style="letter-spacing:0.36px;margin-right:-0.36px">Milly Gammade</span></div>
<div class="x" style="top:1426.65px;left:404.7px;height:10.3px;overflow:hidden;"><span style="letter-spacing:0.31px;margin-right:-0.31px">Condition Reviewer Underwriter Level 2</span></div>
<div class="x" style="top:1426.65px;right:583.3px;text-align:right;height:10.3px;overflow:hidden;"><span style="letter-spacing:0.22px;margin-right:-0.22px">9</span></div>
<div class="x" style="top:1426.65px;right:431.0px;text-align:right;height:10.3px;overflow:hidden;"><span style="letter-spacing:0.22px;margin-right:-0.22px">10</span></div>
<div class="x" style="top:1426.65px;right:260.5px;text-align:right;height:10.3px;overflow:hidden;"><span style="letter-spacing:0.22px;margin-right:-0.22px">13</span></div>
<div class="x" style="top:1426.65px;right:80.0px;text-align:right;height:10.3px;overflow:hidden;"><span style="letter-spacing:0.22px;margin-right:-0.22px">24</span></div>
</section>
</main>
</body>
</html>
